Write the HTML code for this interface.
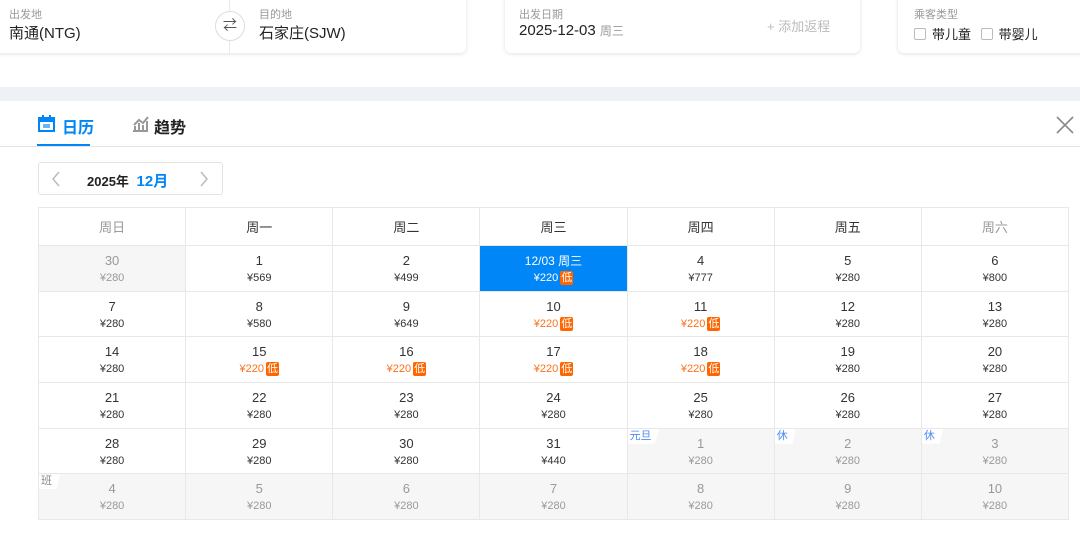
<!DOCTYPE html>
<html><head><meta charset="utf-8"><style>
*{margin:0;padding:0;box-sizing:border-box}
body{width:1080px;height:538px;background:#fff;font-family:"Liberation Sans","Noto Sans CJK SC",sans-serif;position:relative;overflow:hidden;color:#333}
.card{position:absolute;background:#fff;border-radius:6px;box-shadow:0 1px 4px rgba(0,0,0,.12);top:-10px;height:63px}
.lbl{position:absolute;font-size:11px;color:#999}
.val{position:absolute;font-size:15px;color:#222}
.band{position:absolute;left:0;top:87px;width:1080px;height:14px;background:#eef1f5}
table{position:absolute;left:38px;top:207px;border-collapse:collapse;table-layout:fixed;width:1031px}
td{border:1px solid #e8e8e8;text-align:center;height:45.7px;position:relative;font-size:13px;color:#333;line-height:16px;vertical-align:middle;padding-top:4px}
th{border:1px solid #e8e8e8;height:38px;font-weight:normal;font-size:13px;color:#333}
td .p{font-size:11px;line-height:19px}
td.g{background:#f6f6f6;color:#999}
td.o .p{color:#ff6f1a}
.b{display:inline-block;background:#ff6600;color:#fff;font-size:11px;line-height:14px;padding:0 1px;border-radius:2px;margin-left:2px}
td.s{background:#0086f6;color:#fff;font-size:12px}
td.s .p{color:#fff}
.tag{position:absolute;left:0;top:0;background:#fff;color:#4b8bf5;font-size:11px;line-height:15px;padding:0 8px 0 2px;border-bottom-right-radius:6px;clip-path:polygon(0 0,100% 0,85% 100%,0 100%)}
</style></head><body>
<div class="card" style="left:-10px;width:476px"></div>
<div style="position:absolute;left:229px;top:0;width:1px;height:53px;background:#e8e8e8"></div>
<div class="lbl" style="left:9px;top:6px">出发地</div>
<div class="val" style="left:9px;top:22px">南通(NTG)</div>
<div style="position:absolute;left:215px;top:11px;width:30px;height:30px;border-radius:50%;border:1px solid #ddd;background:#fff;font-size:14px;color:#555;text-align:center;line-height:27px">⇄</div>
<div class="lbl" style="left:259px;top:6px">目的地</div>
<div class="val" style="left:259px;top:22px">石家庄(SJW)</div>
<div class="card" style="left:505px;width:355px"></div>
<div class="lbl" style="left:519px;top:6px">出发日期</div>
<div class="val" style="left:519px;top:22px">2025-12-03 <span style="font-size:12px;color:#999">周三</span></div>
<div style="position:absolute;left:767px;top:16px;font-size:13px;color:#bbb">+ 添加返程</div>
<div class="card" style="left:898px;width:200px"></div>
<div class="lbl" style="left:914px;top:6px">乘客类型</div>
<div style="position:absolute;left:914px;top:24px;font-size:13px;color:#222"><span style="display:inline-block;width:12px;height:12px;border:1px solid #bbb;border-radius:2px;vertical-align:-1px;margin-right:6px"></span>带儿童 <span style="display:inline-block;width:12px;height:12px;border:1px solid #bbb;border-radius:2px;vertical-align:-1px;margin:0 6px 0 6px"></span>带婴儿</div>
<div class="band"></div>
<div style="position:absolute;left:0;top:146px;width:1080px;height:1px;background:#e4e4e4"></div>
<div style="position:absolute;left:37px;top:144px;width:53px;height:2px;background:#0086f6"></div>
<svg style="position:absolute;left:38px;top:115px" width="17" height="17" viewBox="0 0 17 17"><rect x="1" y="3" width="15" height="13" fill="none" stroke="#0086f6" stroke-width="2"/><rect x="1" y="3" width="15" height="4" fill="#0086f6"/><rect x="4" y="0" width="2" height="4" fill="#0086f6"/><rect x="11" y="0" width="2" height="4" fill="#0086f6"/><rect x="5" y="9" width="7" height="4" fill="#0086f6" opacity=".6"/></svg>
<div style="position:absolute;left:62px;top:114px;font-size:16px;color:#0086f6;font-weight:bold">日历</div>
<svg style="position:absolute;left:132px;top:115px" width="17" height="17" viewBox="0 0 17 17"><path d="M1 16h15M3 16v-5M7 16v-8M11 16v-6M15 16v-10M2 10l5-5 4 3 5-6" stroke="#999" stroke-width="2" fill="none"/></svg>
<div style="position:absolute;left:154px;top:114px;font-size:16px;color:#222;font-weight:bold">趋势</div>
<svg style="position:absolute;left:1056px;top:116px" width="18" height="18" viewBox="0 0 18 18"><path d="M1 1L17 17M17 1L1 17" stroke="#888" stroke-width="1.6"/></svg>
<div style="position:absolute;left:38px;top:162px;width:185px;height:33px;border:1px solid #e4e4e4;border-radius:3px"></div>
<svg style="position:absolute;left:51px;top:171px" width="10" height="16" viewBox="0 0 10 16"><path d="M8 1L2 8l6 7" stroke="#bbb" stroke-width="1.5" fill="none"/></svg>
<svg style="position:absolute;left:199px;top:171px" width="10" height="16" viewBox="0 0 10 16"><path d="M2 1l6 7-6 7" stroke="#bbb" stroke-width="1.5" fill="none"/></svg>
<div style="position:absolute;left:87px;top:170px;font-size:13px;font-weight:bold;color:#222">2025年 <span style="color:#0086f6;font-size:15px;margin-left:4px">12月</span></div>
<table>
<tr><th style="color:#999">周日</th><th>周一</th><th>周二</th><th>周三</th><th>周四</th><th>周五</th><th style="color:#999">周六</th></tr>
<tr><td class="g">30<div class="p">¥280</div></td><td>1<div class="p">¥569</div></td><td>2<div class="p">¥499</div></td><td class="s">12/03 周三<div class="p">¥220<span class="b">低</span></div></td><td>4<div class="p">¥777</div></td><td>5<div class="p">¥280</div></td><td>6<div class="p">¥800</div></td></tr>
<tr><td>7<div class="p">¥280</div></td><td>8<div class="p">¥580</div></td><td>9<div class="p">¥649</div></td><td class="o">10<div class="p">¥220<span class="b">低</span></div></td><td class="o">11<div class="p">¥220<span class="b">低</span></div></td><td>12<div class="p">¥280</div></td><td>13<div class="p">¥280</div></td></tr>
<tr><td>14<div class="p">¥280</div></td><td class="o">15<div class="p">¥220<span class="b">低</span></div></td><td class="o">16<div class="p">¥220<span class="b">低</span></div></td><td class="o">17<div class="p">¥220<span class="b">低</span></div></td><td class="o">18<div class="p">¥220<span class="b">低</span></div></td><td>19<div class="p">¥280</div></td><td>20<div class="p">¥280</div></td></tr>
<tr><td>21<div class="p">¥280</div></td><td>22<div class="p">¥280</div></td><td>23<div class="p">¥280</div></td><td>24<div class="p">¥280</div></td><td>25<div class="p">¥280</div></td><td>26<div class="p">¥280</div></td><td>27<div class="p">¥280</div></td></tr>
<tr><td>28<div class="p">¥280</div></td><td>29<div class="p">¥280</div></td><td>30<div class="p">¥280</div></td><td>31<div class="p">¥440</div></td><td class="g"><span class="tag">元旦</span>1<div class="p">¥280</div></td><td class="g"><span class="tag">休</span>2<div class="p">¥280</div></td><td class="g"><span class="tag">休</span>3<div class="p">¥280</div></td></tr>
<tr><td class="g"><span class="tag" style="color:#888">班</span>4<div class="p">¥280</div></td><td class="g">5<div class="p">¥280</div></td><td class="g">6<div class="p">¥280</div></td><td class="g">7<div class="p">¥280</div></td><td class="g">8<div class="p">¥280</div></td><td class="g">9<div class="p">¥280</div></td><td class="g">10<div class="p">¥280</div></td></tr>
</table>
</body></html>
